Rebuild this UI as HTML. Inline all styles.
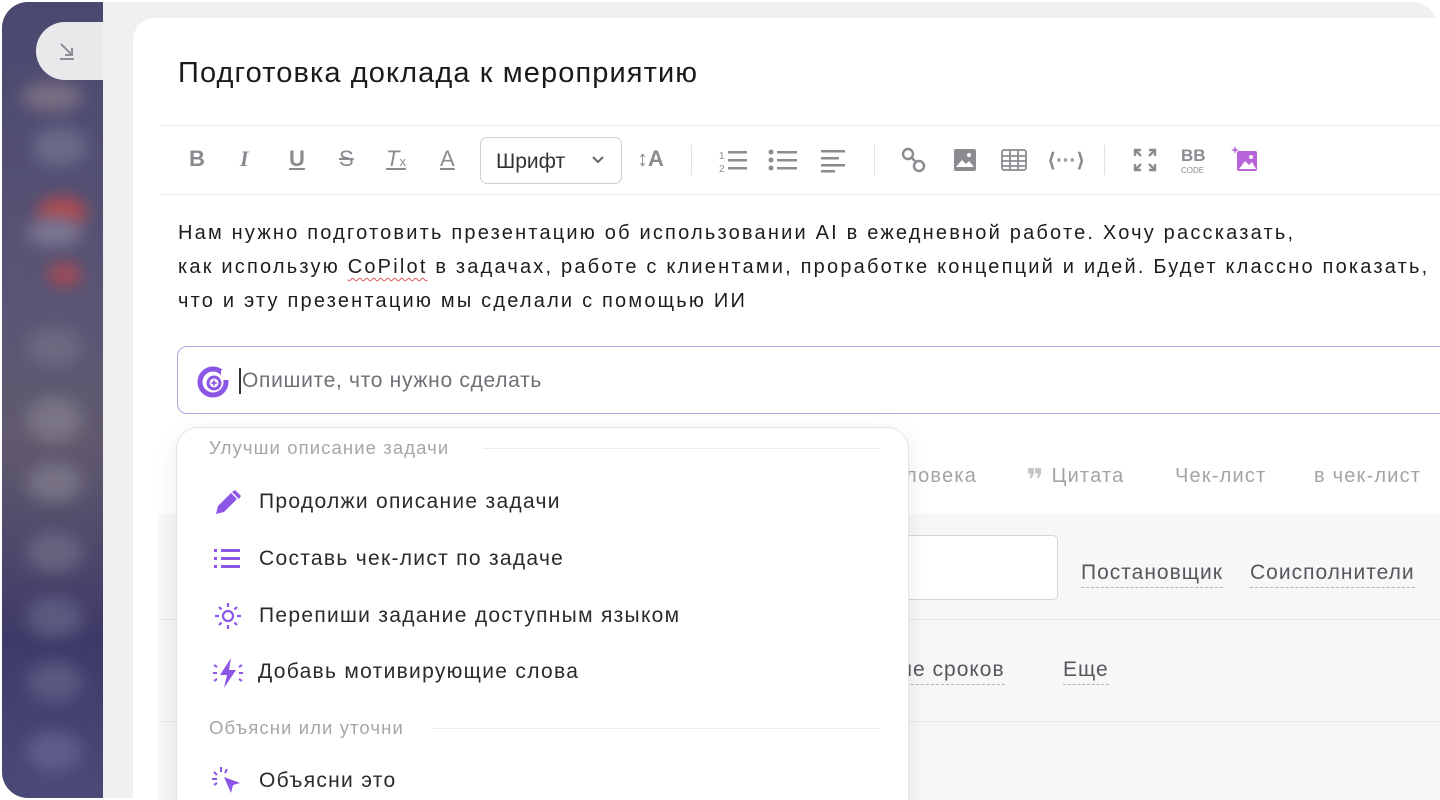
<!DOCTYPE html>
<html><head><meta charset="utf-8"><style>
*{box-sizing:border-box;margin:0;padding:0}
html,body{width:1440px;height:800px;overflow:hidden}
body{background:#fff;font-family:"Liberation Sans","DejaVu Sans",sans-serif;position:relative}
.frame{position:absolute;left:2px;top:2px;width:1436px;height:796px;border-radius:26px;overflow:hidden;background:#eff0f2}
.side{position:absolute;left:0;top:0;width:101px;height:100%;background:linear-gradient(180deg,#4a4870 0%,#5a5675 40%,#615a6e 55%,#3e3a68 80%,#4a4a78 100%)}
.blob{position:absolute;border-radius:50%;filter:blur(8px)}
.tab{position:absolute;left:34px;top:20px;width:67px;height:58px;background:#e9e9ec;border-radius:29px 0 0 29px}
.card{position:absolute;left:131px;top:16px;width:1320px;height:800px;background:#fff;border-radius:22px 0 0 0}
.abs{position:absolute}
.title{left:178px;top:57px;font-size:29px;letter-spacing:1.1px;color:#1a1a1a;white-space:nowrap}
.hl{height:1px;background:#ececef}
.tb{top:146px;height:40px;color:#888b90;font-size:22px;font-weight:bold}
.body{left:178px;top:216px;font-size:20px;letter-spacing:2.2px;line-height:34px;color:#1d1d1f;white-space:nowrap}
.inp{left:177px;top:346px;width:1300px;height:68px;border:1.5px solid #b8a5e3;border-radius:10px;background:#fff}
.grey{left:158px;top:514px;width:1300px;height:290px;background:#f7f7f8}
.dd{left:176px;top:427px;width:733px;height:400px;background:#fff;border:1px solid #e4e4e8;border-radius:22px;box-shadow:0 6px 24px rgba(0,0,0,.08)}
.sec{font-size:18.5px;letter-spacing:1.1px;color:#a4a6aa;white-space:nowrap}
.item{font-size:21px;letter-spacing:1.3px;color:#2a2a2e;white-space:nowrap}
.lnk{font-size:21px;letter-spacing:1px;color:#55575d;border-bottom:1.5px dashed #b0b2b6;padding-bottom:2px;white-space:nowrap}
.mut{font-size:20px;letter-spacing:1.2px;color:#a2a4a8;white-space:nowrap}
</style></head><body>
<div class="frame">
 <div class="side">
  <div class="blob" style="left:20px;top:80px;width:60px;height:30px;background:#7a6f82"></div>
  <div class="blob" style="left:30px;top:125px;width:55px;height:40px;background:#6a6a88"></div>
  <div class="blob" style="left:35px;top:195px;width:50px;height:30px;background:#b24b50"></div>
  <div class="blob" style="left:25px;top:215px;width:55px;height:30px;background:#7a7590"></div>
  <div class="blob" style="left:45px;top:260px;width:35px;height:25px;background:#a24a55"></div>
  <div class="blob" style="left:25px;top:325px;width:55px;height:40px;background:#6d6880"></div>
  <div class="blob" style="left:25px;top:395px;width:55px;height:45px;background:#7a7585"></div>
  <div class="blob" style="left:25px;top:460px;width:55px;height:40px;background:#787285"></div>
  <div class="blob" style="left:25px;top:530px;width:55px;height:40px;background:#676480"></div>
  <div class="blob" style="left:25px;top:595px;width:55px;height:40px;background:#5d5a80"></div>
  <div class="blob" style="left:25px;top:660px;width:55px;height:40px;background:#5b5882"></div>
  <div class="blob" style="left:25px;top:730px;width:55px;height:40px;background:#5f5d88"></div>
 </div>
 <div class="tab"><svg class="abs" style="left:20px;top:18px" width="22" height="22" viewBox="0 0 22 22" fill="none" stroke="#8c8e93" stroke-width="2"><path d="M5 4l11 11M16 8v7H9M4 19h14"/></svg></div>
 <div class="card"></div>
</div>
<div class="abs title">Подготовка доклада к мероприятию</div>
<div class="abs hl" style="left:160px;top:125px;width:1280px"></div>
<div class="abs hl" style="left:160px;top:194px;width:1280px"></div>
<div class="abs tb" style="left:189px">B</div>
<div class="abs tb" style="left:240px;font-style:italic;font-family:'Liberation Serif'">I</div>
<div class="abs tb" style="left:289px;text-decoration:underline">U</div>
<div class="abs tb" style="left:339px;text-decoration:line-through;font-weight:normal">S</div>
<div class="abs tb" style="left:386px;font-style:italic;font-weight:normal;text-decoration:underline">T<span style="font-size:13px;font-style:normal;text-decoration:none">x</span></div>
<div class="abs tb" style="left:440px;font-weight:normal;text-decoration:underline">A</div>
<div class="abs" style="left:480px;top:137px;width:142px;height:47px;border:1px solid #cfd0d4;border-radius:7px;font-size:21px;color:#333;padding:12px 0 0 15px">Шрифт<svg class="abs" style="left:110px;top:17px" width="14" height="10" viewBox="0 0 14 10" fill="none" stroke="#666" stroke-width="2"><path d="M2 2l5 5 5-5"/></svg></div>
<div class="abs tb" style="left:637px;font-size:22px">↕A</div>
<div class="abs" style="left:691px;top:145px;width:1px;height:30px;background:#e2e2e5"></div>
<svg class="abs" style="left:719px;top:148px" width="30" height="26" viewBox="0 0 30 26" fill="#8a8c91"><text x="0" y="11" font-size="10" font-family="Liberation Sans">1</text><text x="0" y="24" font-size="10" font-family="Liberation Sans">2</text><rect x="9" y="3" width="19" height="2.5"/><rect x="9" y="11" width="19" height="2.5"/><rect x="9" y="19" width="19" height="2.5"/></svg>
<svg class="abs" style="left:768px;top:148px" width="30" height="26" viewBox="0 0 30 26" fill="#8a8c91"><circle cx="3" cy="4" r="2.5"/><circle cx="3" cy="12" r="2.5"/><circle cx="3" cy="20" r="2.5"/><rect x="9" y="3" width="20" height="2.5"/><rect x="9" y="11" width="20" height="2.5"/><rect x="9" y="19" width="20" height="2.5"/></svg>
<svg class="abs" style="left:821px;top:149px" width="26" height="24" viewBox="0 0 26 24" fill="#8a8c91"><rect x="0" y="1" width="24" height="2.5"/><rect x="0" y="8" width="18" height="2.5"/><rect x="0" y="15" width="24" height="2.5"/><rect x="0" y="21" width="14" height="2.5"/></svg>
<div class="abs" style="left:874px;top:145px;width:1px;height:30px;background:#e2e2e5"></div>
<svg class="abs" style="left:900px;top:146px" width="28" height="28" viewBox="0 0 28 28" fill="none" stroke="#8a8c91" stroke-width="2.4"><circle cx="8" cy="8" r="5"/><circle cx="19" cy="20" r="5"/><path d="M11 11l5 5"/></svg>
<svg class="abs" style="left:953px;top:148px" width="24" height="24" viewBox="0 0 24 24"><rect x="1" y="1" width="22" height="22" rx="2" fill="#8a8c91"/><path d="M3 19l6-7 4 4 3-3 5 6z" fill="#fff"/><circle cx="16" cy="7" r="2" fill="#fff"/></svg>
<svg class="abs" style="left:1001px;top:149px" width="26" height="22" viewBox="0 0 26 22" fill="none" stroke="#8a8c91" stroke-width="1.8"><rect x="1" y="1" width="24" height="20" rx="2"/><path d="M1 7h24M1 12h24M1 17h24M9 1v20M17 1v20"/></svg>
<div class="abs" style="left:1047px;top:148px;font-size:20px;color:#8a8c91;font-weight:bold">⟨···⟩</div>
<div class="abs" style="left:1104px;top:145px;width:1px;height:30px;background:#e2e2e5"></div>
<svg class="abs" style="left:1133px;top:148px" width="24" height="24" viewBox="0 0 24 24" fill="none" stroke="#8a8c91" stroke-width="2.4"><path d="M2 8V2h6M2 2l6 6M22 8V2h-6M22 2l-6 6M2 16v6h6M2 22l6-6M22 16v6h-6M22 22l-6-6"/></svg>
<div class="abs" style="left:1181px;top:147px;font-size:17px;font-weight:bold;color:#8a8c91;line-height:17px">BB</div>
<div class="abs" style="left:1181px;top:166px;font-size:8px;color:#8a8c91">CODE</div>
<svg class="abs" style="left:1231px;top:144px" width="30" height="30" viewBox="0 0 30 30"><rect x="6" y="7" width="20" height="20" rx="2" fill="#b864d8"/><path d="M8 25l6-8 4 4 3-3 4 7z" fill="#fff"/><circle cx="20" cy="13" r="2" fill="#fff"/><path d="M4 2l1 3 3 1-3 1-1 3-1-3-3-1 3-1z" fill="#b864d8"/></svg>
<div class="abs body">Нам нужно подготовить презентацию об использовании AI в ежедневной работе. Хочу рассказать,<br>как использую <span style="text-decoration:underline wavy #e05555;text-underline-offset:4px;text-decoration-thickness:1px">CoPilot</span> в задачах, работе с клиентами, проработке концепций и идей. Будет классно показать,<br>что и эту презентацию мы сделали с помощью ИИ</div>
<div class="abs grey"></div>
<div class="abs mut" style="left:905px;top:465px">ловека</div>
<div class="abs mut" style="left:1026px;top:465px"><b style="font-size:30px;color:#c4c6ca;vertical-align:-8px;line-height:10px">❞</b> Цитата</div>
<div class="abs mut" style="left:1175px;top:465px">Чек-лист</div>
<div class="abs mut" style="left:1314px;top:465px">в чек-лист</div>
<div class="abs" style="left:880px;top:535px;width:178px;height:65px;background:#fff;border:1px solid #d3d4d8;border-radius:5px"></div>
<div class="abs lnk" style="left:1081px;top:561px">Постановщик</div>
<div class="abs lnk" style="left:1250px;top:561px">Соисполнители</div>
<div class="abs hl" style="left:160px;top:619px;width:1280px;background:#e8e8ea"></div>
<div class="abs lnk" style="left:875px;top:658px">ание сроков</div>
<div class="abs lnk" style="left:1063px;top:658px">Еще</div>
<div class="abs hl" style="left:160px;top:721px;width:1280px;background:#e8e8ea"></div>
<div class="abs inp"></div>
<svg class="abs" style="left:196px;top:365px" width="34" height="34" viewBox="0 0 34 34"><circle cx="17" cy="17" r="13" fill="none" stroke="#8b55e6" stroke-width="5"/><circle cx="18" cy="18" r="6" fill="none" stroke="#8b55e6" stroke-width="3"/><path d="M18 14l1 3 3 1-3 1-1 3-1-3-3-1 3-1z" fill="#8b55e6"/><rect x="25" y="5" width="9" height="10" fill="#fff"/></svg>
<div class="abs" style="left:239px;top:368px;width:1.5px;height:26px;background:#333"></div>
<div class="abs" style="left:242px;top:369px;font-size:21px;letter-spacing:0.7px;color:#6e7076;white-space:nowrap">Опишите, что нужно сделать</div>
<div class="abs dd"></div>
<div class="abs sec" style="left:209px;top:437px">Улучши описание задачи</div>
<div class="abs hl" style="left:483px;top:448px;width:397px"></div>
<svg class="abs" style="left:213px;top:489px" width="30" height="28" viewBox="0 0 30 28"><path d="M3 25l2-8L18 4l6 6L11 23z" fill="#8b55e6"/><path d="M19 3l3-2 6 6-2 3z" fill="#8b55e6"/></svg>
<div class="abs item" style="left:259px;top:490px">Продолжи описание задачи</div>
<svg class="abs" style="left:213px;top:547px" width="30" height="24" viewBox="0 0 30 24" fill="#8b55e6"><rect x="1" y="2" width="3" height="3"/><rect x="1" y="10" width="3" height="3"/><rect x="1" y="18" width="3" height="3"/><rect x="8" y="2" width="19" height="3"/><rect x="8" y="10" width="19" height="3"/><rect x="8" y="18" width="19" height="3"/></svg>
<div class="abs item" style="left:259px;top:547px">Составь чек-лист по задаче</div>
<svg class="abs" style="left:213px;top:601px" width="30" height="30" viewBox="0 0 30 30" fill="none" stroke="#8b55e6" stroke-width="2.2"><circle cx="15" cy="15" r="5"/><path d="M15 2v4M15 24v4M2 15h4M24 15h4M6 6l2.5 2.5M21.5 21.5L24 24M6 24l2.5-2.5M21.5 8.5L24 6"/></svg>
<div class="abs item" style="left:259px;top:604px">Перепиши задание доступным языком</div>
<svg class="abs" style="left:211px;top:656px" width="34" height="34" viewBox="0 0 34 34"><path d="M20 2L9 19h7l-3 13 12-18h-7z" fill="#8b55e6"/><path d="M3 9l3 2M2 17h4M3 25l3-2M31 9l-3 2M32 17h-4M31 25l-3-2" stroke="#8b55e6" stroke-width="2"/></svg>
<div class="abs item" style="left:258px;top:660px">Добавь мотивирующие слова</div>
<div class="abs sec" style="left:209px;top:717px">Объясни или уточни</div>
<div class="abs hl" style="left:432px;top:728px;width:448px"></div>
<svg class="abs" style="left:211px;top:766px" width="34" height="34" viewBox="0 0 34 34"><path d="M13 11l16 6-7 2-2 8z" fill="#8b55e6"/><path d="M10 1v5M3 6l3 3M1 13h5M16 3l-2 4M3 19l3-2" stroke="#8b55e6" stroke-width="2"/></svg>
<div class="abs item" style="left:259px;top:769px">Объясни это</div>
</body></html>
